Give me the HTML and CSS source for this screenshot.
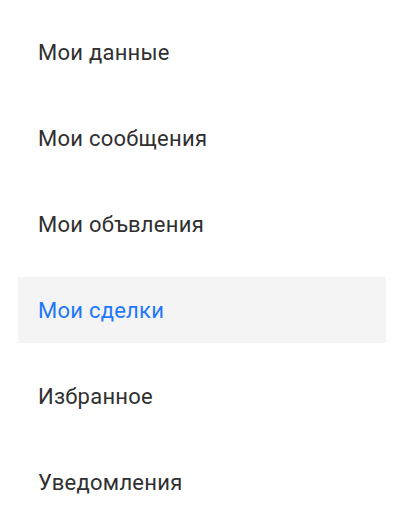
FILE: index.html
```html
<!DOCTYPE html>
<html lang="ru">
<head>
<meta charset="utf-8">
<link rel="stylesheet" href="styles.css">
</head>
<body>
<nav class="menu">
  <a class="item">Мои данные</a>
  <a class="item">Мои сообщения</a>
  <a class="item">Мои объвления</a>
  <a class="item active">Мои сделки</a>
  <a class="item">Избранное</a>
  <a class="item">Уведомления</a>
</nav>
</body>
</html>
```
FILE: styles.css
```css
html, body {
  margin: 0;
  padding: 0;
  background: #fff;
}
.menu {
  display: flex;
  flex-direction: column;
  gap: 20px;
  padding: 19px 17px 0 18px;
  font-family: Roboto, "Noto Sans", sans-serif;
}
.item {
  display: flex;
  align-items: center;
  height: 66px;
  padding-left: 20px;
  font-size: 22px;
  letter-spacing: 0.25px;
  color: #303030;
  text-decoration: none;
}
.item.active {
  background: #f4f4f4;
  color: #1f77fc;
}
```
